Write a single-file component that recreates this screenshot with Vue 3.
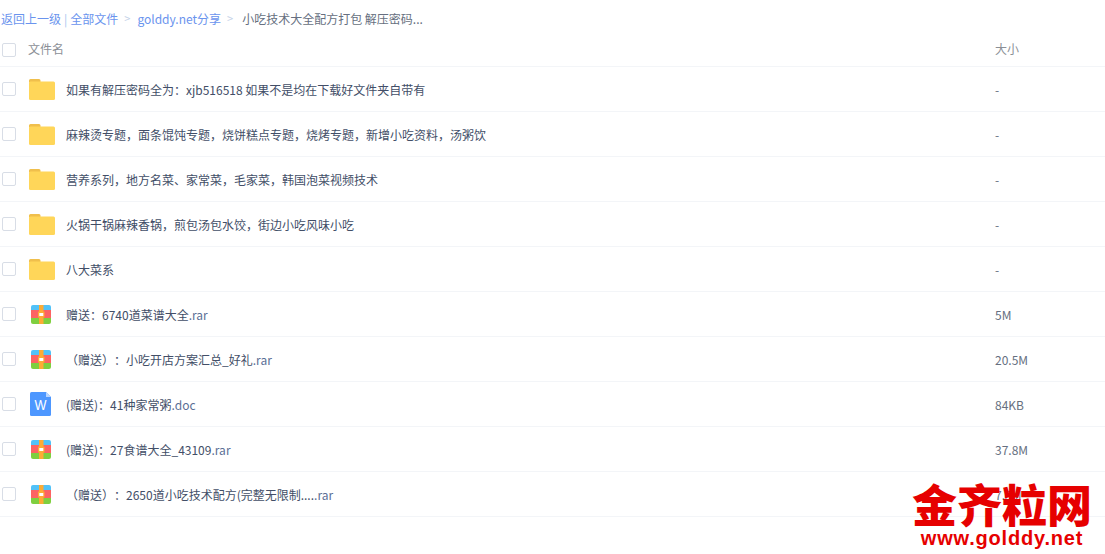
<script setup>
const rows = [
  { type: 'folder', name: '如果有解压密码全为：xjb516518 如果不是均在下载好文件夹自带有', ext: '', size: '-' },
  { type: 'folder', name: '麻辣烫专题，面条馄饨专题，烧饼糕点专题，烧烤专题，新增小吃资料，汤粥饮', ext: '', size: '-' },
  { type: 'folder', name: '营养系列，地方名菜、家常菜，毛家菜，韩国泡菜视频技术', ext: '', size: '-' },
  { type: 'folder', name: '火锅干锅麻辣香锅，煎包汤包水饺，街边小吃风味小吃', ext: '', size: '-' },
  { type: 'folder', name: '八大菜系', ext: '', size: '-' },
  { type: 'rar', name: '赠送：6740道菜谱大全', ext: '.rar', size: '5M' },
  { type: 'rar', name: '（赠送）：小吃开店方案汇总_好礼', ext: '.rar', size: '20.5M' },
  { type: 'doc', name: '(赠送)：41种家常粥', ext: '.doc', size: '84KB' },
  { type: 'rar', name: '(赠送)：27食谱大全_43109', ext: '.rar', size: '37.8M' },
  { type: 'rar', name: '（赠送）：2650道小吃技术配方(完整无限制....', ext: '.rar', size: '7.5M' }
]
</script>

<template>
  <div class="page">
    <div class="crumbs">
      <span class="link">返回上一级</span>
      <span class="bar">|</span>
      <span class="link">全部文件</span>
      <span class="sep">&gt;</span>
      <span class="link">golddy.net分享</span>
      <span class="sep">&gt;</span>
      <span class="current">小吃技术大全配方打包 解压密码...</span>
    </div>
    <div class="head">
      <span class="check"></span>
      <span class="title">文件名</span>
      <span class="size">大小</span>
    </div>
    <div v-for="row in rows" :key="row.name" class="row">
      <span class="check"></span>
      <span class="icon">
        <svg v-if="row.type === 'folder'" width="28" height="24" viewBox="0 0 28 24">
          <path d="M1 3.500a1.500 1.500 0 0 1 1.500-1.500h8.500a1.500 1.500 0 0 1 1.500 1.500v2H1z" fill="#f0bf4c" />
          <rect x="1" y="4.500" width="26" height="18.500" rx="1.500" fill="#ffd659" />
        </svg>
        <svg v-else-if="row.type === 'rar'" width="28" height="24" viewBox="0 0 28 24">
          <path d="M3 5a2 2 0 0 1 2-2h16a2 2 0 0 1 2 2v3.500H3z" fill="#52c2f8" />
          <rect x="3" y="8" width="20" height="8" fill="#fc6363" />
          <path d="M3 16h20v4a2 2 0 0 1-2 2H5a2 2 0 0 1-2-2z" fill="#7fcf3f" />
          <rect x="11" y="3" width="4.500" height="19" fill="#fdab35" />
          <rect x="10" y="9.700" width="6.500" height="5.600" fill="#fdab35" />
          <rect x="11.300" y="11" width="4" height="3" fill="#fff" />
        </svg>
        <svg v-else width="28" height="24" viewBox="0 0 28 24">
          <path d="M2 1.500A1.500 1.500 0 0 1 3.500 0H18l5 5v17.500a1.500 1.500 0 0 1-1.500 1.500h-18A1.500 1.500 0 0 1 2 22.500z" fill="#4d97ff" />
          <path d="M18 0l5 5h-5z" fill="#b9d6ff" />
          <text x="12.500" y="18" text-anchor="middle" textLength="12" lengthAdjust="spacingAndGlyphs" class="w">W</text>
        </svg>
      </span>
      <span class="name">{{ row.name }}<span class="ext">{{ row.ext }}</span></span>
      <span class="size">{{ row.size }}</span>
    </div>
    <div class="mark">
      <div class="mark-cn">金齐粒网</div>
      <div class="mark-url">www.golddy.net</div>
    </div>
  </div>
</template>

<style scoped>
.page {
  position: relative;
  width: 1105px;
  height: 554px;
  overflow: hidden;
  background: #fff;
  font-family: "Noto Sans CJK SC", "Noto Sans", sans-serif;
  font-size: 12px;
  color: #424e67;
  text-spacing-trim: space-all;
}
.crumbs {
  display: flex;
  align-items: center;
  height: 36px;
  padding-left: 1px;
  white-space: nowrap;
}
.link { color: #6a94ee; }
.bar { color: #a9c4ef; margin: 0 3px; }
.sep { color: #c4d2e8; margin: 0 7px 0 6px; font-size: 11px; }
.current { color: #666f80; margin-left: 2px; }
.head, .row {
  display: flex;
  align-items: center;
  box-sizing: border-box;
  padding-left: 2px;
  border-bottom: 1px solid #f3f5f8;
}
.head { height: 31px; padding-bottom: 6px; color: #8b8f96; }
.head .check { margin-top: 4px; }
.row { height: 45px; }
.check {
  flex: none;
  box-sizing: border-box;
  width: 14px;
  height: 14px;
  border: 1px solid #d8dde6;
  border-radius: 2px;
}
.title { margin-left: 12px; }
.icon {
  flex: none;
  display: flex;
  width: 28px;
  height: 24px;
  margin-left: 12px;
}
.name {
  width: 929px;
  flex: none;
  margin-left: 10px;
  white-space: nowrap;
}
.head .title { width: 967px; flex: none; }
.ext { color: #5b6f96; }
.size { white-space: nowrap; color: #666f80; }
.head .size { color: #8b8f96; }
.w {
  font-family: "Liberation Sans", sans-serif;
  font-size: 15px;
  fill: #fff;
}
.mark {
  position: absolute;
  left: 912px;
  top: 480px;
  width: 180px;
  text-align: center;
  color: #e60000;
  font-weight: 900;
  white-space: nowrap;
}
.mark-cn {
  font-family: "Noto Sans CJK SC", sans-serif;
  font-size: 45px;
  line-height: 48px;
}
.mark-url {
  font-family: "Liberation Sans", sans-serif;
  font-size: 20px;
  line-height: 20px;
  font-weight: 700;
  letter-spacing: 0.8px;
}
</style>
